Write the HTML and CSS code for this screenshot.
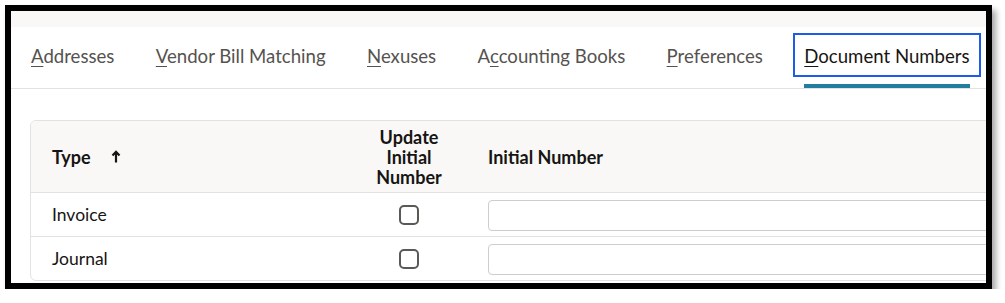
FILE: index.html
```html
<!DOCTYPE html>
<html lang="en">
<head>
  <meta charset="UTF-8">
  <title>Subsidiary - Document Numbers</title>
  <link rel="stylesheet" href="styles.css">
</head>
<body>
  <div class="frame">
    <div class="top-strip"></div>

    <!-- Tabs -->
    <nav class="tabbar">
      <a class="tab"><span class="tab-label"><u>A</u>ddresses</span><span class="tab-ind"></span></a>
      <a class="tab"><span class="tab-label"><u>V</u>endor Bill Matching</span><span class="tab-ind"></span></a>
      <a class="tab"><span class="tab-label"><u>N</u>exuses</span><span class="tab-ind"></span></a>
      <a class="tab"><span class="tab-label">A<u>c</u>counting Books</span><span class="tab-ind"></span></a>
      <a class="tab"><span class="tab-label"><u>P</u>references</span><span class="tab-ind"></span></a>
      <a class="tab active"><span class="tab-label"><u>D</u>ocument Numbers</span><span class="tab-ind"></span></a>
    </nav>

    <!-- Table -->
    <div class="card">
      <div class="row head">
        <div class="cell c-type">Type
          <svg class="sort" width="10" height="13" viewBox="0 0 10 13">
            <path d="M5 12.5V2M1.5 5.5L5 1.8L8.5 5.5" fill="none" stroke="#161513" stroke-width="2.2"/>
          </svg>
        </div>
        <div class="cell c-upd">Update<br>Initial<br>Number</div>
        <div class="cell c-num">Initial Number</div>
      </div>
      <div class="row">
        <div class="cell c-type">Invoice</div>
        <div class="cell c-upd"><span class="check"></span></div>
        <div class="cell c-num"><span class="field"></span></div>
      </div>
      <div class="row">
        <div class="cell c-type">Journal</div>
        <div class="cell c-upd"><span class="check"></span></div>
        <div class="cell c-num"><span class="field"></span></div>
      </div>
    </div>
  </div>
</body>
</html>
```

FILE: styles.css
```css
:root {
  --ink: #161513;
  --muted: #55524f;
  --line: #e3e2e0;
  --panel: #f9f8f6;
  --teal: #227e9e;
  --focus: #1e5be6;
}

* {
  margin: 0;
  padding: 0;
  box-sizing: border-box;
}

body {
  background: #ffffff;
  font-family: 'Lato', 'Liberation Sans', sans-serif;
  color: var(--ink);
}

/* Screenshot frame */
.frame {
  margin: 5px 0 0 5px;
  width: 987px;
  height: 284px;
  border: 6px solid #000;
  background: #fff;
  overflow: hidden;
  box-shadow: 4px 5px 6px rgba(0, 0, 0, 0.35);
}

.top-strip {
  height: 16px;
  background: var(--panel);
}

/* Tabs */
.tabbar {
  display: flex;
  gap: 19.4px;
  padding: 6px 0 0 9px;
  border-bottom: 1px solid var(--line);
  white-space: nowrap;
}

.tab {
  display: flex;
  flex-direction: column;
  color: var(--muted);
  font-size: 18.6px;
}

.tab-label {
  display: block;
  height: 44px;
  line-height: 42px;
  padding: 0 9px;
  border: 2px solid transparent;
}

.tab u {
  text-underline-offset: 3px;
  text-decoration-thickness: 1px;
}

.tab-ind {
  height: 4px;
  margin: 7px 11px 0;
}

.tab.active {
  color: var(--ink);
}

.tab.active .tab-label {
  border-color: var(--focus);
}

.tab.active .tab-ind {
  background: var(--teal);
}

/* Table card */
.card {
  margin: 31px 0 0 19px;
  width: 1000px;
  border: 1px solid var(--line);
  border-radius: 6px;
  overflow: hidden;
}

.row {
  display: grid;
  grid-template-columns: 325px 106px 1fr;
  align-items: center;
  height: 44px;
  border-top: 1px solid var(--line);
  font-size: 17.5px;
}

.row.head {
  height: 71px;
  border-top: none;
  background: var(--panel);
  font-size: 18px;
  font-weight: 700;
  line-height: 20px;
}

.cell.c-type {
  padding-left: 21px;
  display: flex;
  align-items: center;
}

.sort {
  margin-left: 20px;
}

.cell.c-upd {
  text-align: center;
  display: flex;
  justify-content: center;
}

.cell.c-num {
  padding-left: 26px;
}

.check {
  display: block;
  width: 20px;
  height: 20px;
  border: 2px solid #5b5956;
  border-radius: 5px;
  margin-top: 1px;
}

.field {
  display: block;
  height: 31px;
  border: 1px solid #cfcdca;
  border-radius: 4px;
  margin-top: 1px;
}
```
